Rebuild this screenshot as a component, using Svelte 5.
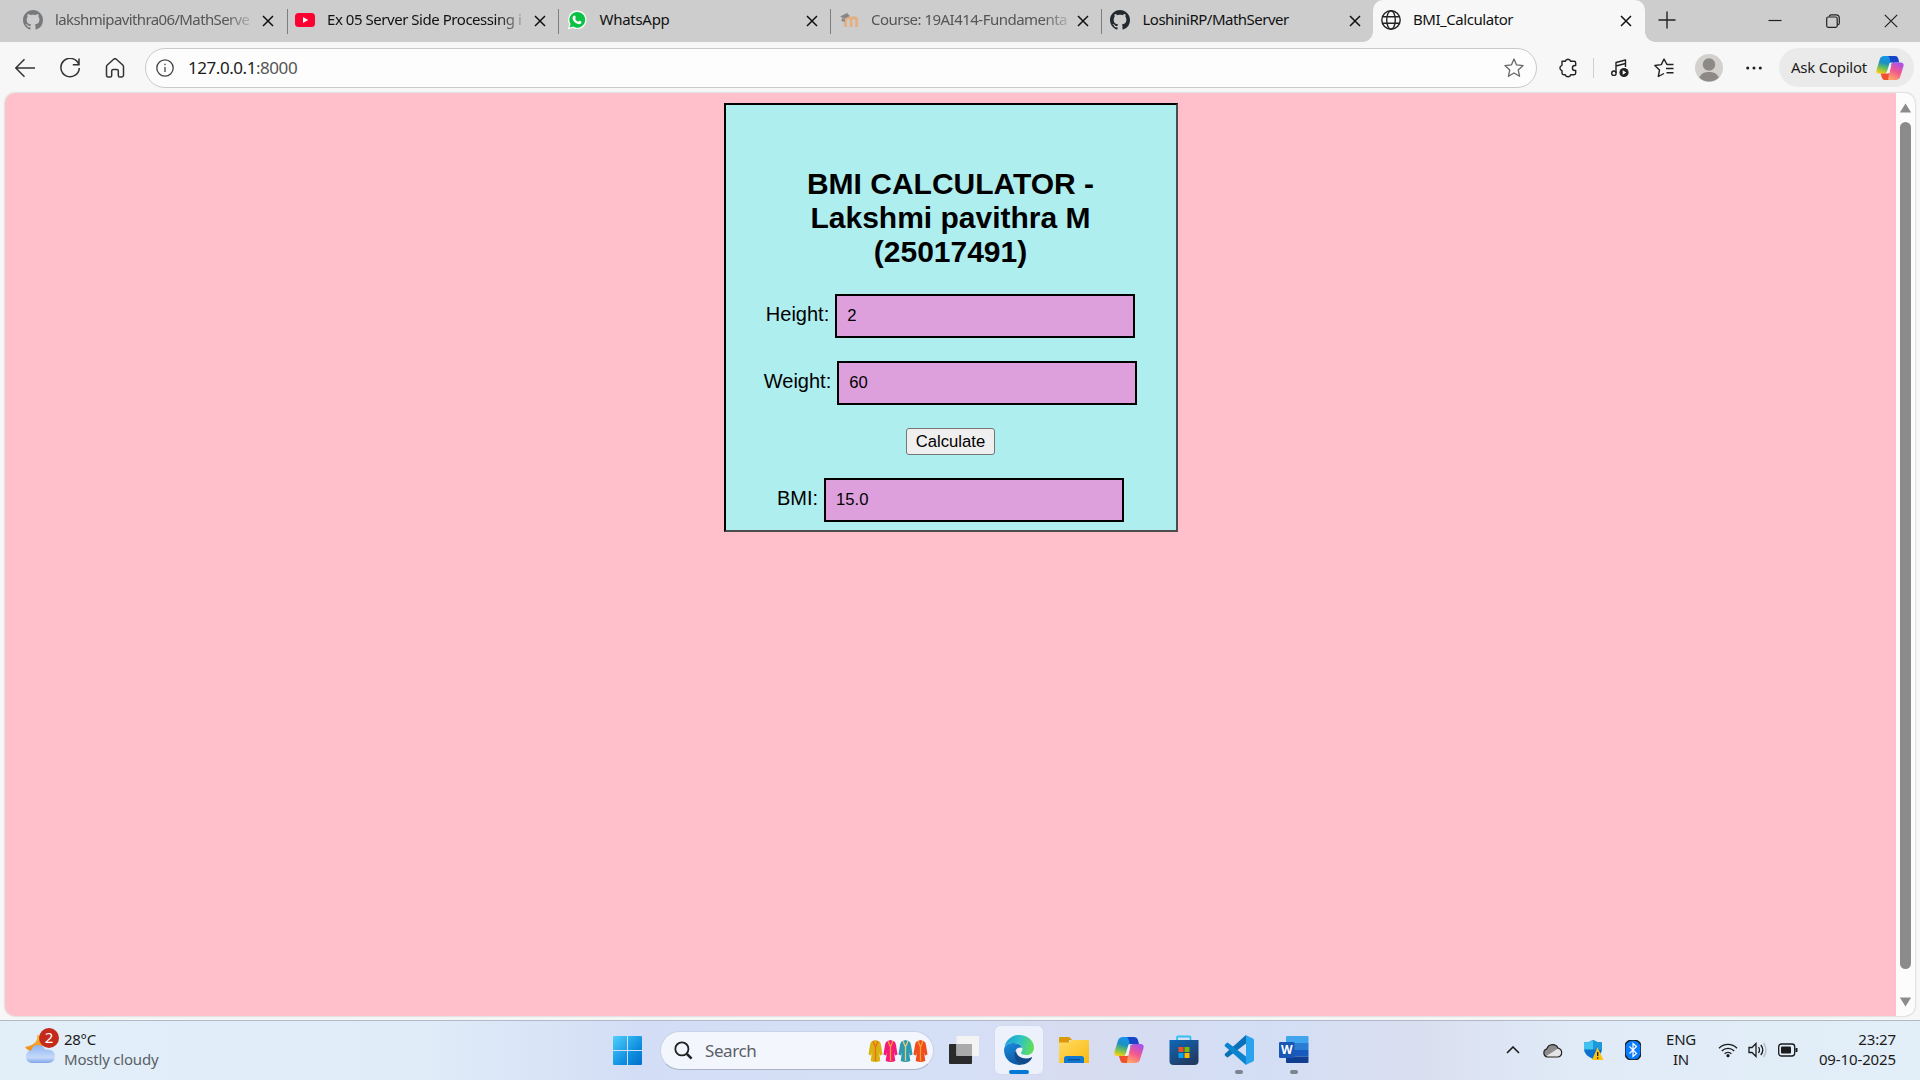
<script>
  const tabs = [
    { icon: 'github', title: 'lakshmipavithra06/MathServe', dim: true, fade: true, ls: -0.62 },
    { icon: 'youtube', title: 'Ex 05 Server Side Processing i', fade: true, ls: -0.46 },
    { icon: 'whatsapp', title: 'WhatsApp', ls: -0.28 },
    { icon: 'moodle', title: 'Course: 19AI414-Fundamenta', dim: true, fade: true, ls: -0.52 },
    { icon: 'github', title: 'LoshiniRP/MathServer', ls: -0.5 },
    { icon: 'globe', title: 'BMI_Calculator', active: true, ls: -0.45 },
  ];
  let height = $state('2');
  let weight = $state('60');
  let bmi = $state('15.0');
  function calculate() {
    bmi = (Number(weight) / Number(height) ** 2).toFixed(1);
  }
  const coats = [
    ['#d9b310', '#f06a20'],
    ['#f5197c', '#f7a12b'],
    ['#2a9bb0', '#e8c87a'],
    ['#ef4e1c', '#f9a13a'],
  ];
</script>

{#snippet copilot(id)}
  <svg class="copilot" viewBox="0 0 30 28">
    <defs>
      <linearGradient id="{id}a" x1="0.6" y1="0" x2="0.3" y2="1">
        <stop offset="0" stop-color="#1597f0" /><stop offset=".4" stop-color="#1c8fc4" /><stop offset=".7" stop-color="#6bbf5a" /><stop offset="1" stop-color="#f5cf10" />
      </linearGradient>
      <linearGradient id="{id}b" x1="0.8" y1="0" x2="0.3" y2="1">
        <stop offset="0" stop-color="#a54ff0" /><stop offset=".5" stop-color="#f2588f" /><stop offset="1" stop-color="#ffa965" />
      </linearGradient>
    </defs>
    <path d="M9 1h11q-2 .5-3 4l-3.300 11.500Q12.500 20 9.500 20H3.500Q-.5 20 .6 15.500L4 4.500Q5 1 9 1z" fill="url(#{id}a)" />
    <path d="M15 1h5.500q2.500 0 3.300 2.500L25 8h-5q-2.500 0-3.800 3L15 5q-.5-3-2-4z" fill="#1745c8" />
    <path d="M21 27H10q2-.5 3-4l3.300-11.500Q17.500 8 20.500 8h6Q30.500 8 29.400 12.500L26 23.500Q25 27 21 27z" fill="url(#{id}b)" />
    <path d="M15 27H9.500q-2.500 0-3.200-2.500L5 20h5q2.500 0 3.800-3L14 20q-1 5-1 7z" fill="#f0502c" />
    <path d="M16.300 9.500L18.500 8h-2l-2 .5-2.500 8.500-1.500 3h2l2-.5z" fill="#eef1fa" />
  </svg>
{/snippet}

<div class="screen">
  <header class="tabstrip">
    {#each tabs as tab}
      <div class="tab" class:active={tab.active} class:dim={tab.dim}>
        <span class="favicon">
          {#if tab.icon === 'github'}
            <svg viewBox="0 0 16 16" width="20" height="20"><path fill="#24292f" d="M8 0C3.580 0 0 3.580 0 8c0 3.540 2.290 6.530 5.470 7.590.4.070.550-.170.550-.380 0-.190-.010-.820-.010-1.490-2.010.370-2.530-.490-2.690-.940-.090-.230-.480-.940-.820-1.130-.280-.150-.680-.520-.010-.530.630-.010 1.080.580 1.230.820.720 1.210 1.870.870 2.330.660.070-.520.280-.870.510-1.070-1.780-.200-3.640-.890-3.640-3.950 0-.870.310-1.590.820-2.150-.080-.200-.360-1.020.080-2.120 0 0 .670-.210 2.200.820.640-.180 1.320-.270 2-.270s1.360.090 2 .270c1.530-1.040 2.200-.820 2.200-.820.440 1.100.160 1.920.080 2.120.510.560.820 1.270.820 2.150 0 3.070-1.870 3.750-3.650 3.950.290.250.540.730.540 1.480 0 1.070-.010 1.930-.010 2.200 0 .210.150.460.550.380A8.010 8.010 0 0 0 16 8c0-4.420-3.580-8-8-8z" /></svg>
          {:else if tab.icon === 'youtube'}
            <svg viewBox="0 0 20 20" width="20" height="20"><rect y="3" width="20" height="14" rx="3.500" fill="#ff0033" /><path d="M8 7l5.200 3L8 13z" fill="#fff" /></svg>
          {:else if tab.icon === 'whatsapp'}
            <svg viewBox="0 0 20 20" width="20" height="20"><path d="M10.200.6a9.200 9.200 0 1 1-4.300 17.300L.8 19.300l1.500-4.900A9.200 9.200 0 0 1 10.200.6z" fill="#fff" /><path d="M10.200 1.900a7.900 7.900 0 1 1-4.100 14.600l-3.600 1 1.100-3.500A7.900 7.900 0 0 1 10.200 1.900z" fill="#0ac143" /><path d="M7.300 5.400c.5-.1.700.1.900.6l.6 1.500c.1.400-.6 1-.7 1.300.6 1.300 1.700 2.300 3 2.900.4 0 .9-1 1.300-1l1.800.9c.4.200.3 1.300-.2 1.800-1 1-2.500.9-4.200.1-2-1-3.400-2.500-4.100-4.300-.5-1.400 0-3.300 1.600-3.800z" fill="#fff" /></svg>
          {:else if tab.icon === 'moodle'}
            <svg viewBox="0 0 20 20" width="20" height="20"><path d="M6.500 17V10.500q0-2.700 2.800-2.700t2.800 2.700V17M12.100 10.500q0-2.700 2.800-2.700t2.800 2.700V17" fill="none" stroke="#f7943c" stroke-width="3" /><path d="M1 6.500L8 3l3 3-5.500 2.800zM3 8l3 1.500-.5 2.500L2.500 11z" fill="#444" /></svg>
          {:else}
            <svg viewBox="0 0 20 20" width="20" height="20" fill="none" stroke="#222" stroke-width="1.400"><circle cx="10" cy="10" r="9.200" /><ellipse cx="10" cy="10" rx="4.300" ry="9.200" /><path d="M1.500 6.800h17M1.500 13.200h17" /></svg>
          {/if}
        </span>
        <span class="title" class:fade={tab.fade} style:letter-spacing="{tab.ls}px">{tab.title}</span>
        <svg class="x" viewBox="0 0 12 12"><path d="M1 1l10 10M11 1L1 11" /></svg>
      </div>
    {/each}
    <svg class="plus" viewBox="0 0 18 18"><path d="M9 .5v17M.5 9h17" /></svg>
    <div class="window-buttons">
      <svg viewBox="0 0 14 14"><path d="M.5 6.500h13" /></svg>
      <svg viewBox="0 0 14 14"><rect x=".7" y="3" width="10.500" height="10.300" rx="1.500" /><path d="M3.200 2.600Q3.500.8 5.200.8H10Q13.300.8 13.300 4v5q0 1.600-1.800 2" /></svg>
      <svg viewBox="0 0 14 14"><path d="M.8.8l12.400 12.400M13.200.8L.8 13.200" /></svg>
    </div>
  </header>

  <nav class="toolbar">
    <div class="nav-icons">
      <svg viewBox="0 0 20 20"><path d="M20 10H.8M9.500 1.200L.8 10l8.700 8.800" /></svg>
      <svg viewBox="0 0 20 20"><path d="M18.800 6.500A9.200 9.200 0 1 0 19.300 10M19 .5v6.200h-6.200" /></svg>
      <svg viewBox="0 0 20 20"><path d="M1.500 8.800Q1.500 7.800 2.300 7L8.700 1.200q1.300-1.100 2.600 0L17.700 7q.8.800.8 1.800v8.500q0 1.700-1.700 1.700h-2q-1.500 0-1.500-1.600V13q0-1.500-1.500-1.500H8.200q-1.500 0-1.500 1.500v4.400Q6.700 19 5.200 19h-2q-1.700 0-1.700-1.700z" /></svg>
    </div>
    <div class="address">
      <svg class="info" viewBox="0 0 18 18"><circle cx="9" cy="9" r="8.200" /><path d="M9 8v5M9 4.800v1.500" /></svg>
      <span class="url">127.0.0.1<i>:8000</i></span>
      <svg class="star" viewBox="0 0 20 20"><path d="M10 1l2.600 5.900 6.500.7-4.900 4.300 1.400 6.400L10 15l-5.600 3.300 1.400-6.400L.9 7.600l6.500-.7z" /></svg>
    </div>
    <div class="actions">
      <svg viewBox="0 0 20 20"><path d="M4 3.300h3.300a2.800 2.800 0 0 1 5.400 0H16q1.700 0 1.700 1.700v2.500h-.8a2.500 2.500 0 0 0 0 5h.8V15q0 1.700-1.700 1.700h-3.300a2.800 2.800 0 0 1-5.400 0H5.700Q4 16.700 4 15v-2.300a2.800 2.800 0 0 1 0-5.400z" /></svg>
      <span class="divider"></span>
      <svg viewBox="0 0 20 20"><path d="M6 15V4.500L15.500 2v7M6 8l9.500-2.500" /><circle cx="3.900" cy="15.200" r="2.200" /><circle cx="14" cy="14.500" r="4.600" fill="#222" stroke="none" /><path d="M12.700 12.200l3.500 2.300-3.500 2.300z" fill="#fff" stroke="none" /></svg>
      <svg viewBox="0 0 20 20"><path d="M19.500 6.500h-6l-.6-.2L10 1 7.300 6.600.8 7.500l4.700 4.600-1.200 6.400L10 15.500M12 10.500h7.500M12.500 14.800h7" /></svg>
      <svg class="avatar" viewBox="0 0 28 28"><circle cx="14" cy="14" r="14" fill="#d3d1ce" /><circle cx="14" cy="10.500" r="6.200" fill="#8d8986" /><path d="M4.200 23.500C6.500 19 10 18 14 18s7.500 1 9.800 5.500A14 14 0 0 1 4.200 23.500z" fill="#8d8986" /></svg>
      <svg class="dots" viewBox="0 0 20 20"><circle cx="3" cy="10" r="1.700" /><circle cx="10" cy="10" r="1.700" /><circle cx="17" cy="10" r="1.700" /></svg>
    </div>
    <div class="ask"><span>Ask Copilot</span>{@render copilot('t')}</div>
  </nav>

  <div class="viewport">
    <main>
      <form class="card" onsubmit={(e) => { e.preventDefault(); calculate(); }}>
        <h1>BMI CALCULATOR -<br />Lakshmi pavithra M<br />(25017491)</h1>
        <label>Height: <input bind:value={height} /></label>
        <label>Weight: <input bind:value={weight} /></label>
        <button>Calculate</button>
        <label>BMI: <input value={bmi} readonly /></label>
      </form>
    </main>
    <aside class="scrollbar">
      <svg viewBox="0 0 12 10"><path d="M6 .5L11.600 9.500H.4z" /></svg>
      <div class="thumb"></div>
      <svg viewBox="0 0 12 10"><path d="M6 9.500L.4.500h11.200z" /></svg>
    </aside>
  </div>

  <footer>
    <div class="weather">
      <svg viewBox="0 0 34 36" width="34" height="36">
        <defs>
          <linearGradient id="cl" x1="0" y1="0" x2="0" y2="1"><stop offset="0" stop-color="#8fb4f0" /><stop offset=".7" stop-color="#c5dafa" /><stop offset="1" stop-color="#7fa4e8" /></linearGradient>
          <linearGradient id="mn" x1="0" y1="0" x2="0" y2="1"><stop offset="0" stop-color="#f8bd33" /><stop offset="1" stop-color="#f08a1c" /></linearGradient>
        </defs>
        <path d="M12 7q2 9-12 12 3 5 10 4l9-6V8z" fill="url(#mn)" />
        <path d="M6.500 35a6.500 6.500 0 0 1-.3-12.800Q8 16.500 13.500 17q5 .3 6.500 4.500 10-1 9.800 7 0 6.500-7 6.500z" fill="url(#cl)" />
        <circle cx="24" cy="10" r="10" fill="#c42b1c" />
        <text x="24" y="15.300" text-anchor="middle" font-size="15" fill="#fff">2</text>
      </svg>
      <div class="forecast"><b>28°C</b><span>Mostly cloudy</span></div>
    </div>

    <div class="apps">
      <svg class="start" viewBox="0 0 29 29"><defs><linearGradient id="win" x1="0" y1="0" x2="1" y2="1"><stop offset="0" stop-color="#4fd0fc" /><stop offset=".6" stop-color="#1090e0" /><stop offset="1" stop-color="#0070cc" /></linearGradient></defs><path d="M1 0h13v14H0V1q0-1 1-1zM15 0h13q1 0 1 1v13H15zM0 15h14v14H1q-1 0-1-1zM15 15h14v13q0 1-1 1H15z" fill="url(#win)" /></svg>
      <div class="search">
        <svg class="lens" viewBox="0 0 20 20"><circle cx="8.300" cy="8.300" r="6.900" /><path d="M13.500 13.500l5 5" stroke-width="2.800" /></svg>
        <span>Search</span>
        <svg class="coats" viewBox="0 0 60 22">
          {#each coats as [body, trim], i}
            <g transform="translate({i * 15} 0)">
              <path d="M4 1.200L7.500 0 11 1.200Q12.500 2 13 5l1.500 9.500-2.500 1L11 12l1.300 9q-4.800 2-9.600 0L4 12l-1 3.500-2.500-1L2 5Q2.500 2 4 1.200z" fill={body} />
              <path d="M5 1l2.500 6L10 1M7.500 7v14" stroke={trim} stroke-width="1.300" fill="none" />
            </g>
          {/each}
        </svg>
      </div>
      <svg class="task" viewBox="0 0 30 28"><rect y="8" width="23" height="20" rx="1" fill="#2b2b2b" /><rect x="7.500" width="22.500" height="20" rx="1" fill="#f3f3f3" /><path d="M7.500 8H23v12H7.500z" fill="#aaa" /></svg>
      <div class="app current">
        <svg viewBox="0 0 30 30">
          <defs>
            <linearGradient id="eg" x1="0" y1=".3" x2="1" y2=".5"><stop offset="0" stop-color="#1a9fd8" /><stop offset=".5" stop-color="#2dc2c8" /><stop offset="1" stop-color="#62e052" /></linearGradient>
            <linearGradient id="eb" x1="0" y1="0" x2=".4" y2="1"><stop offset="0" stop-color="#1b8fe0" /><stop offset="1" stop-color="#0c59a4" /></linearGradient>
          </defs>
          <path d="M.5 12C2 5 8 0 15 0c9 0 15 6 15 12.500 0 5-3.500 7.500-7.500 7.500-3 0-5.500-1-5.500-2.300 0-.8 1.500-1.400 1.500-3.700C18.500 10 14 8 9.500 8 5 8 1.500 10 .5 12z" fill="url(#eg)" />
          <path d="M0 15C0 10.500 4.500 8 9.500 8c5 0 8 2.500 8.800 5-3-1.500-7 .5-7.300 4.500C10.700 23 15 29 18.500 29.600 8 31.500 0 24 0 15z" fill="url(#eb)" />
          <path d="M12 15c-3 5-1 13 6.500 14.600C23 29 26.500 26 28 23c.3-.7-.3-1-1-.6-5 2.500-15 .6-15-7.400z" fill="#114a8b" />
        </svg>
      </div>
      <div class="app">
        <svg viewBox="0 0 30 30"><defs><linearGradient id="fo" x1="0" y1="0" x2="1" y2="1"><stop offset="0" stop-color="#ffdc62" /><stop offset="1" stop-color="#fbb912" /></linearGradient></defs><path d="M0 3q0-1 1-1h8.500q1 0 1.700.8L13 5h-3v5H0z" fill="#dc9a08" /><path d="M0 7.500h9q1 0 1.500-.8L12 5h17q1 0 1 1v22H0z" fill="url(#fo)" /><path d="M5 28V23.500Q5 21 7.500 21h15q2.500 0 2.500 2.500V28z" fill="#1078d0" /><path d="M9 24.700h12" stroke="#084c8c" stroke-width="1.200" /></svg>
      </div>
      <div class="app">{@render copilot('b')}</div>
      <div class="app">
        <svg viewBox="0 0 30 30"><defs><linearGradient id="st" x1="0" y1="0" x2=".6" y2="1"><stop offset="0" stop-color="#0f68b8" /><stop offset="1" stop-color="#213a64" /></linearGradient></defs><path d="M8 6V2.500Q8 1.500 9 1.500h11.500q1 0 1 1V6" fill="none" stroke="#35c0f0" stroke-width="1.800" /><path d="M.5 5h29v21q0 4-4 4h-21q-4 0-4-4z" fill="url(#st)" /><path d="M9.500 12h5v5h-5z" fill="#f25022" /><path d="M15.500 12h5v5h-5z" fill="#7fba00" /><path d="M9.500 18h5v5h-5z" fill="#00a4ef" /><path d="M15.500 18h5v5h-5z" fill="#ffb900" /></svg>
      </div>
      <div class="app running">
        <svg viewBox="0 0 30 30"><path d="M22 0L1 18.800q-.8.900 0 1.700l1.700 1.600q.8.600 1.600 0L22 8.500z" fill="#0a70b8" /><path d="M22 30L1 11.200q-.8-.9 0-1.700l1.700-1.600q.8-.6 1.600 0L22 21.500z" fill="#0b84cf" /><path d="M21.500 0L29 3.400q1 .5 1 1.600v20q0 1.100-1 1.600L21.500 30q.5-.5.500-2V2q0-1.500-.5-2z" fill="#2aa3ee" /></svg>
      </div>
      <div class="app running">
        <svg viewBox="0 0 30 30"><path d="M7 2q0-1 1-1h20.500q1 0 1 1v6H7z" fill="#41a5ee" /><path d="M7 8h22.500v7H7z" fill="#2b7cd3" /><path d="M7 15h22.500v6.500H7z" fill="#185abd" /><path d="M7 21.500h22.500V27q0 1-1 1H8q-1 0-1-1z" fill="#103f91" /><rect y="7" width="15.500" height="16" rx="1.300" fill="#1a56b5" /><text x="7.700" y="19" text-anchor="middle" font-size="12" font-weight="700" fill="#fff">W</text></svg>
      </div>
    </div>

    <div class="tray">
      <svg class="chev" viewBox="0 0 14 8"><path d="M1 7l6-6 6 6" /></svg>
      <svg class="cloud" viewBox="0 0 20 15"><path d="M5 14a4.200 4.200 0 0 1-.6-8.200A6 6 0 0 1 15.500 5a4.600 4.600 0 0 1 0 9z" fill="#8c8c8c" /><path d="M3 13.500L12.500 7.500Q16 4.500 18.500 8q1.800 4-2.500 6H5z" fill="#e4e4e4" /><path d="M5 14a4.200 4.200 0 0 1-.6-8.200A6 6 0 0 1 15.500 5a4.600 4.600 0 0 1 0 9z" fill="none" stroke="#222" stroke-width="1.200" /></svg>
      <svg class="shield" viewBox="0 0 20 20"><path d="M9 0q4 2.500 9 2.500V9q0 6-9 10Q0 15 0 9V2.500Q5 2.500 9 0z" fill="#0a72cc" /><path d="M9 0v9.500H0v-7Q5 2.500 9 0z" fill="#42c2ee" /><path d="M9 0q4 2.500 9 2.500v7H9z" fill="#1c98dc" /><path d="M13.500 7.500L19.500 20H8z" fill="#ffc20e" /><path d="M13.700 12v4M13.700 17.200v1.500" stroke="#222" stroke-width="1.400" /></svg>
      <svg class="bt" viewBox="0 0 16 20"><rect width="16" height="20" rx="7" fill="#0a7cff" /><path d="M4.500 6.500l7 7L8 16.500v-13l3.500 3-7 7" fill="none" stroke="#fff" stroke-width="1.200" /></svg>
      <div class="lang"><span>ENG</span><span>IN</span></div>
      <svg class="wifi" viewBox="0 0 20 16"><path d="M1 6.200a12.700 12.700 0 0 1 18 0M3.800 9a8.800 8.800 0 0 1 12.400 0M6.600 11.700a4.800 4.800 0 0 1 6.800 0" /><circle cx="10" cy="13.700" r="1.600" fill="#1b1b1b" stroke="none" /></svg>
      <svg class="vol" viewBox="0 0 20 16"><path d="M1 5.500h3L8 1.500v13l-4-4H1zM10.500 5q2 3 0 6M12.800 3q4 5 0 10" /><path d="M15.500 1q5 7 0 14" stroke="#b5bcc4" /></svg>
      <svg class="bat" viewBox="0 0 20 14"><rect x=".7" y="1" width="16" height="12" rx="2.800" /><rect x="3" y="3.500" width="10" height="7" rx="1" fill="#1b1b1b" stroke="none" /><path d="M18.500 5v4" stroke-width="2" /></svg>
      <div class="clock"><span>23:27</span><span>09-10-2025</span></div>
    </div>
  </footer>
</div>

<style>
  :global(body) { margin: 0; overflow: hidden; }
  .screen { width: 1920px; height: 1080px; display: flex; flex-direction: column; background: #f7f7f7; font-family: "Noto Sans", "Open Sans", sans-serif; color: #1b1b1b; box-sizing: border-box; }
  .screen :global(*) { box-sizing: border-box; }
  svg { display: block; flex: none; }

  .tabstrip { height: 42px; flex: none; display: flex; background: #cdcdcd; padding-left: 16px; }
  .tab { position: relative; width: 271.500px; flex: none; display: flex; align-items: center; padding: 0 13px 3px 7px; }
  .tab:first-child { padding-right: 14px; }
  .tab:nth-child(n + 3):not(.active) { padding-left: 8px; }
  .tab:not(.active)::after { content: ""; position: absolute; right: 0; top: 9px; width: 1px; height: 25px; background: #7d7d7d; }
  .tab:nth-child(5)::after { display: none; }
  .favicon { width: 20px; margin-right: 12.500px; }
  .tab:first-child .favicon { margin-right: 12px; }
  .title { flex: none; white-space: nowrap; font-size: 15px; line-height: 22px; padding-bottom: 1px; color: #111; }
  .fade { -webkit-mask-image: linear-gradient(to right, #000 88%, rgb(0 0 0 / .25) 100%); mask-image: linear-gradient(to right, #000 88%, rgb(0 0 0 / .25) 100%); }
  .dim .favicon { opacity: .5; }
  .dim .title { color: #555; }
  .x { width: 12px; height: 12px; margin: 2px 0 0 auto; fill: none; stroke: #111; stroke-width: 1.500; }
  .tab.active { width: 272.500px; margin-left: -1px; padding-left: 8px; background: #f7f7f7; border-radius: 10px 10px 0 0; }
  .active::before, .active::after { content: ""; position: absolute; bottom: 0; width: 10px; height: 10px; }
  .active::before { left: -10px; background: radial-gradient(circle at 0 0, #cdcdcd 9.500px, #f7f7f7 10px); }
  .active::after { right: -10px; background: radial-gradient(circle at 100% 0, #cdcdcd 9.500px, #f7f7f7 10px); }
  .plus { width: 18px; height: 18px; margin: 10.500px 0 0 13px; stroke: #222; stroke-width: 1.400; }
  .window-buttons { margin: 14px 22px 0 auto; display: flex; gap: 44px; }
  .window-buttons svg { width: 14px; height: 14px; fill: none; stroke: #222; stroke-width: 1.200; }

  .toolbar { height: 51px; flex: none; display: flex; align-items: flex-start; padding: 6px 6px 0 15px; }
  .nav-icons { display: flex; gap: 25px; margin-top: 10px; }
  .nav-icons svg { width: 20px; height: 20px; fill: none; stroke: #333; stroke-width: 1.500; }
  .address { width: 1392px; height: 40px; margin-left: 20px; border: 1px solid #c9c9c9; border-radius: 20px; background: #fdfdfd; display: flex; align-items: center; padding: 0 12px 0 10px; }
  .info { width: 18px; height: 18px; fill: none; stroke: #444; stroke-width: 1.300; }
  .url { margin-left: 14px; padding-bottom: 2px; font-size: 17px; letter-spacing: -.45px; color: #1b1b1b; }
  .url i { font-style: normal; color: #555; }
  .star { width: 20px; height: 20px; margin-left: auto; fill: none; stroke: #666; stroke-width: 1.300; stroke-linejoin: round; }
  .actions { display: flex; align-items: center; height: 40px; margin-left: 21px; }
  .actions svg { width: 20px; height: 20px; fill: none; stroke: #222; stroke-width: 1.400; stroke-linejoin: round; }
  .divider { width: 1px; height: 20px; background: #cfcfcf; margin: 0 16px 0 15px; }
  .actions svg + svg { margin-left: 24px; }
  .actions svg.avatar { width: 28px; height: 28px; stroke: none; margin-left: 21px; }
  .actions svg.dots { fill: #222; stroke: none; width: 18px; height: 18px; margin-left: 21.500px; }
  .ask { width: 135px; height: 39px; margin-left: auto; border-radius: 20px; background: #eaeaea; display: flex; align-items: center; justify-content: space-between; padding: 0 10px 0 12px; font-size: 15px; letter-spacing: -.25px; white-space: nowrap; }
  .ask span { padding-bottom: 1px; }
  .ask .copilot { width: 28px; height: 26px; }

  .viewport { height: 923px; flex: none; margin: 0 5px 0 5px; border-radius: 10px; overflow: hidden; display: flex; box-shadow: 0 0 2px #aaa; background: #fcfcfc; }
  main { flex: 1; background: #ffc0cb; padding-top: 10px; font-family: "Liberation Sans", Arial, sans-serif; color: #000; }
  .card { width: 454px; height: 429px; margin: 0 auto; border: 2px solid; border-color: #000 #4c4c4c #4c4c4c #000; background: #afeeee; display: flex; flex-direction: column; align-items: center; }
  .card > * { flex: none; }
  h1 { margin: 62px 0 25px; font-size: 30px; line-height: 34px; text-align: center; font-weight: 700; }
  label { display: flex; font-size: 20px; line-height: 40px; gap: 6px; margin-bottom: 23px; }
  label:last-child { margin-bottom: 0; }
  input { width: 300px; height: 44px; border: 2px solid #000; border-radius: 0; background: #dda0dd; padding: 0 10px; font: 16.670px "Liberation Sans", Arial, sans-serif; color: #000; outline: none; }
  button { width: 89px; height: 27px; padding: 0; margin-bottom: 23px; border: 1px solid #767676; border-radius: 3px; background: #efefef; font: 16.670px "Liberation Sans", Arial, sans-serif; color: #000; }
  .scrollbar { width: 19px; display: flex; flex-direction: column; align-items: center; padding: 10px 1px 9px 0; }
  .scrollbar svg { width: 13px; height: 10px; fill: #8b8b8b; }
  .thumb { width: 11px; height: 847px; margin: 9px 0 28px; border-radius: 6px; background: #8b8b8b; }

  footer { margin-top: 4px; height: 60px; flex: none; border-top: 1px solid #b0bac6; display: grid; grid-template-columns: 612px 1fr 425px; background: linear-gradient(90deg, #e2eef8 0, #e0ecf8 22%, #d3def6 33%, #d5dff6 50%, #d7dcf0 56%, #d3def5 66%, #dadff0 74%, #e0ebf7 82%, #e2eef8 100%); font-size: 15px; }
  .weather { display: flex; padding: 7px 0 0 25px; }
  .forecast { display: flex; flex-direction: column; margin-left: 5px; line-height: 20px; padding-top: 1px; }
  .forecast b { font-weight: 400; letter-spacing: -.3px; }
  .forecast span { color: #5a6066; letter-spacing: -.2px; }
  .apps { display: flex; align-items: flex-start; padding-top: 5px; }
  .start { width: 29px; height: 29px; margin: 10px 17.500px 0 1px; }
  .search { width: 274px; height: 39px; margin-top: 5px; border-radius: 20px; background: #f3f6fd; border: 1px solid #c9d2e6; border-bottom-color: #a9b3c8; display: flex; align-items: center; padding: 0 5px 0 13px; font-size: 17px; color: #5b5f66; }
  .lens { width: 19px; height: 19px; fill: none; stroke: #222; stroke-width: 1.900; }
  .search span { margin-left: 12.500px; letter-spacing: -.4px; }
  .coats { width: 60px; height: 22px; margin-left: auto; }
  .task { width: 30px; height: 28px; margin: 10px 16px 0 15.500px; }
  .app { position: relative; width: 48px; height: 48px; margin-right: 7px; border-radius: 5px; display: grid; place-items: center; }
  .app > svg, .app > :global(.copilot) { width: 30px; height: 30px; }
  .current { background: #edf1fb; box-shadow: 0 0 1px #b7bfd2; }
  .current::after, .running::after { content: ""; position: absolute; bottom: 0; left: 20px; width: 8px; height: 4px; border-radius: 2px; background: #7d8490; }
  .current::after { left: 14px; width: 20px; background: #0078d4; }
  .tray { display: flex; align-items: center; padding-bottom: 1px; }
  .tray svg { fill: none; stroke: #1b1b1b; stroke-width: 1.300; }
  .tray .chev { width: 14px; height: 8px; margin-left: 11px; stroke-width: 1.600; }
  .tray .cloud { width: 21px; height: 15px; margin-left: 22px; stroke: none; }
  .tray .shield { width: 20px; height: 20px; margin-left: 21px; stroke: none; }
  .tray .bt { width: 16px; height: 20px; margin-left: 21px; }
  .lang, .clock { display: flex; flex-direction: column; align-items: center; line-height: 20px; padding-bottom: 2px; }
  .lang { width: 40px; margin: 0 17px 0 20px; letter-spacing: -.3px; }
  .tray .wifi { width: 20px; height: 16px; }
  .tray .vol { width: 20px; height: 16px; margin-left: 10px; }
  .tray .bat { width: 20px; height: 14px; margin-left: 10px; }
  .clock { align-items: flex-end; margin: 0 24px 0 auto; letter-spacing: -.12px; }
</style>
